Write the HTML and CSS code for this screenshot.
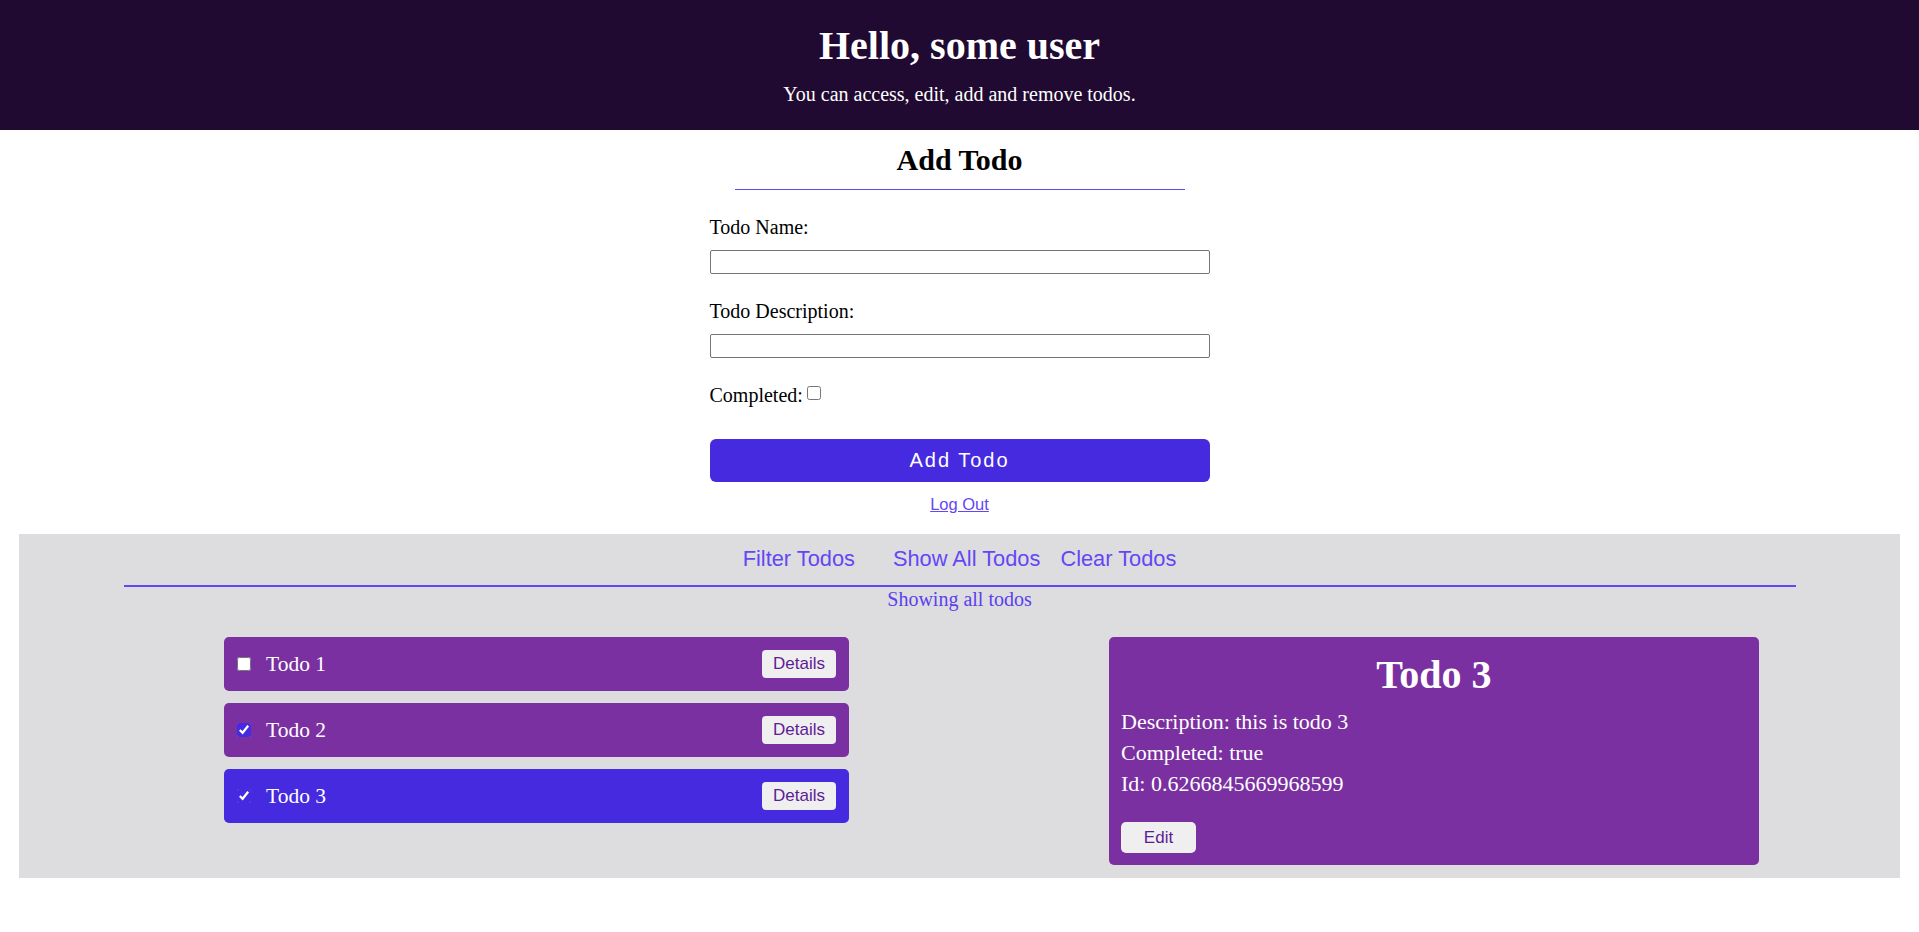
FILE: index.html
```html
<!DOCTYPE html>
<html lang="en">
<head>
<meta charset="utf-8">
<title>Todos</title>
<link rel="stylesheet" href="styles.css">
</head>
<body>
<header class="hero">
  <h1 class="hero-title">Hello, some user</h1>
  <p class="hero-sub">You can access, edit, add and remove todos.</p>
</header>
<main>
  <section class="add">
    <h2 class="add-title">Add Todo</h2>
    <div class="add-rule"></div>
    <form class="add-form">
      <label class="field-label" for="todo-name">Todo Name:</label>
      <input class="field-input" id="todo-name" type="text">
      <label class="field-label field-label--next" for="todo-desc">Todo Description:</label>
      <input class="field-input" id="todo-desc" type="text">
      <label class="check-label">Completed: <input class="check" type="checkbox"></label>
      <button class="add-btn" type="button">Add Todo</button>
    </form>
    <a class="logout" href="#">Log Out</a>
  </section>

  <section class="board">
    <nav class="board-nav">
      <a class="board-link board-link--filter" href="#">Filter Todos</a>
      <a class="board-link board-link--all" href="#">Show All Todos</a>
      <a class="board-link" href="#">Clear Todos</a>
    </nav>
    <div class="board-rule"></div>
    <p class="board-status">Showing all todos</p>
    <div class="board-body">
      <ul class="todo-list">
        <li class="todo">
          <input class="todo-check" type="checkbox">
          <span class="todo-name">Todo 1</span>
          <button class="todo-btn" type="button">Details</button>
        </li>
        <li class="todo">
          <input class="todo-check" type="checkbox" checked>
          <span class="todo-name">Todo 2</span>
          <button class="todo-btn" type="button">Details</button>
        </li>
        <li class="todo todo--active">
          <input class="todo-check" type="checkbox" checked>
          <span class="todo-name">Todo 3</span>
          <button class="todo-btn" type="button">Details</button>
        </li>
      </ul>
      <article class="detail">
        <h2 class="detail-title">Todo 3</h2>
        <p class="detail-line detail-line--first">Description: this is todo 3</p>
        <p class="detail-line">Completed: true</p>
        <p class="detail-line">Id: 0.6266845669968599</p>
        <button class="detail-btn" type="button">Edit</button>
      </article>
    </div>
  </section>
</main>
</body>
</html>
```

FILE: styles.css
```css
* {
  box-sizing: border-box;
}

html, body {
  margin: 0;
  padding: 0;
  background: #ffffff;
}

body {
  font-family: "Liberation Serif", "Times New Roman", serif;
  color: #000000;
}

/* Header */
.hero {
  height: 130px;
  padding-top: 24px;
  background: #210a32;
  color: #ffffff;
  text-align: center;
}

.hero-title {
  margin: 0;
  font-size: 40px;
  line-height: 44px;
  font-weight: bold;
}

.hero-sub {
  margin: 15px 0 0;
  font-size: 20px;
  line-height: 22px;
}

/* Add form */
.add {
  display: flex;
  flex-direction: column;
  align-items: center;
}

.add-title {
  margin: 13px 0 0;
  font-size: 30px;
  line-height: 33px;
  font-weight: bold;
}

.add-rule {
  width: 450px;
  height: 1px;
  margin-top: 13px;
  background: #5b4cf0;
}

.add-form {
  width: 500px;
  margin-top: 26px;
  display: flex;
  flex-direction: column;
}

.field-label {
  display: block;
  font-size: 20px;
  line-height: 22px;
  margin-bottom: 12px;
}

.field-label--next {
  margin-top: 26px;
}

.field-input {
  display: block;
  width: 500px;
  height: 24px;
  margin: 0;
  padding: 1px 2px;
  border: 1px solid #767676;
  border-radius: 2px;
  background: #ffffff;
  font-size: 16px;
}

.check-label {
  display: flex;
  align-items: center;
  margin-top: 26px;
  font-size: 20px;
  line-height: 22px;
}

.check {
  width: 14px;
  height: 14px;
  margin: -4px 0 0 4px;
}

.add-btn {
  margin-top: 33px;
  height: 43px;
  width: 500px;
  border: none;
  border-radius: 6px;
  background: #462ae0;
  color: #ffffff;
  font-family: "Liberation Sans", Arial, sans-serif;
  font-size: 20px;
  letter-spacing: 2px;
  cursor: pointer;
}

.logout {
  margin-top: 13px;
  font-family: "Liberation Sans", Arial, sans-serif;
  font-size: 16.5px;
  line-height: 19px;
  color: #6446f5;
  text-decoration: underline;
}

/* Board */
.board {
  margin: 20px 19px 0;
  padding: 13px 0 13px;
  background: #dddde0;
}

.board-nav {
  display: flex;
  justify-content: center;
  font-family: "Liberation Sans", Arial, sans-serif;
  font-size: 21.8px;
  line-height: 24px;
}

.board-link {
  color: #6347f5;
  text-decoration: none;
}

.board-link--filter {
  margin-right: 38px;
}

.board-link--all {
  margin-right: 20px;
}

.board-rule {
  width: 1672px;
  height: 2px;
  margin: 14px auto 0;
  background: #6347f5;
}

.board-status {
  margin: 2px 0 0;
  text-align: center;
  font-size: 20px;
  line-height: 21px;
  color: #5b40ee;
}

.board-body {
  display: flex;
  align-items: flex-start;
  gap: 260px;
  margin-top: 27px;
  padding-left: 205px;
}

.todo-list {
  list-style: none;
  margin: 0;
  padding: 0;
  width: 625px;
  display: flex;
  flex-direction: column;
  gap: 12px;
}

.todo {
  display: flex;
  align-items: center;
  height: 54px;
  padding: 0 13px;
  border-radius: 5px;
  background: #7a30a0;
  color: #ffffff;
}

.todo--active {
  background: #462ae0;
}

.todo-check {
  width: 14px;
  height: 14px;
  margin: 0;
  accent-color: #462ae0;
}

.todo-name {
  margin-left: 15px;
  font-size: 21.5px;
  line-height: 24px;
}

.todo-btn {
  margin-left: auto;
  height: 28px;
  padding: 0 11px;
  border: none;
  border-radius: 4px;
  background: #efefef;
  color: #5e1b96;
  font-family: "Liberation Sans", Arial, sans-serif;
  font-size: 17px;
  cursor: pointer;
}

.detail {
  width: 650px;
  padding: 16px 12px 12px;
  border-radius: 5px;
  background: #7a30a0;
  color: #ffffff;
}

.detail-title {
  margin: 0;
  text-align: center;
  font-size: 40px;
  line-height: 44px;
  font-weight: bold;
}

.detail-line {
  margin: 0;
  font-size: 22px;
  line-height: 31px;
}

.detail-line--first {
  margin-top: 9px;
}

.detail-btn {
  display: block;
  margin-top: 23px;
  width: 75px;
  height: 31px;
  border: none;
  border-radius: 5px;
  background: #efefef;
  color: #5e1b96;
  font-family: "Liberation Sans", Arial, sans-serif;
  font-size: 17px;
  cursor: pointer;
}
```
